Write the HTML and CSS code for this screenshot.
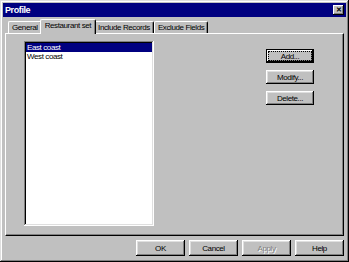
FILE: index.html
```html
<!DOCTYPE html>
<html>

<head>
  <meta charset="UTF-8">
  <title>Profile</title>
  <link rel="stylesheet" href="styles.css">
</head>

<body>
  <div class="window">
    <div class="titlebar">
      <span class="title">Profile</span>
      <span class="close">&#x2715;</span>
    </div>
    <div class="content">
      <div class="tabs">
        <div class="tab">General</div>
        <div class="tab active">Restaurant set</div>
        <div class="tab">Include Records</div>
        <div class="tab">Exclude Fields</div>
      </div>
      <div class="panel">
        <ul class="list">
          <li class="selected">East coast</li>
          <li>West coast</li>
        </ul>
        <div class="side">
          <button class="btn default">Add...</button>
          <button class="btn">Modify...</button>
          <button class="btn">Delete...</button>
        </div>
      </div>
      <div class="footer">
        <button class="btn wide">OK</button>
        <button class="btn wide">Cancel</button>
        <button class="btn wide disabled">Apply</button>
        <button class="btn wide">Help</button>
      </div>
    </div>
  </div>
</body>

</html>
```

FILE: styles.css
```css
* {
  margin: 0;
  padding: 0;
  box-sizing: border-box;
}

body {
  background: #c0c0c0;
  font-family: "Liberation Sans", Arial, sans-serif;
  font-size: 8px;
  letter-spacing: -0.4px;
  color: #000;
}

.window {
  width: 349px;
  height: 262px;
  padding: 3px;
  display: flex;
  flex-direction: column;
  background: #c0c0c0;
  box-shadow: inset -1px -1px #000, inset 1px 1px #dfdfdf,
    inset -2px -2px #808080, inset 2px 2px #fff;
}

.titlebar {
  height: 14px;
  background: #000080;
  display: flex;
  align-items: center;
  justify-content: space-between;
  padding: 0 2px 0 2px;
}

.title {
  color: #fff;
  font-weight: bold;
  font-size: 9px;
  letter-spacing: -0.4px;
}

.close {
  width: 11px;
  height: 10px;
  background: #c0c0c0;
  font-size: 7px;
  font-weight: bold;
  line-height: 10px;
  text-align: center;
  letter-spacing: 0;
  box-shadow: inset -1px -1px #000, inset 1px 1px #fff,
    inset -2px -2px #808080;
}

.content {
  flex: 1;
  display: flex;
  flex-direction: column;
  padding: 2px 2px 3px 2px;
}

.tabs {
  display: flex;
  align-items: flex-end;
  height: 14px;
  padding-left: 3px;
}

.tab {
  height: 12px;
  line-height: 12px;
  padding: 0 3px;
  border-top: 1px solid #fff;
  border-left: 1px solid #fff;
  border-right: 1px solid #000;
  border-radius: 2px 2px 0 0;
  box-shadow: inset -1px 0 #808080;
}

.tab.active {
  position: relative;
  z-index: 1;
  height: 15px;
  margin: 0 -2px -1px -2px;
  padding: 0 4px 2px 4px;
  line-height: 12px;
  background: #c0c0c0;
}

.panel {
  flex: 1;
  display: flex;
  align-items: flex-start;
  padding: 7px 0 0 18px;
  border-top: 1px solid #fff;
  border-left: 1px solid #fff;
  border-right: 1px solid #000;
  border-bottom: 1px solid #000;
  box-shadow: inset -1px -1px #808080;
}

.list {
  list-style: none;
  width: 130px;
  height: 185px;
  padding: 2px;
  background: #fff;
  box-shadow: inset -1px -1px #fff, inset 1px 1px #808080,
    inset -2px -2px #dfdfdf, inset 2px 2px #000;
}

.list li {
  height: 9px;
  line-height: 9px;
  padding-left: 1px;
}

.list li.selected {
  background: #000080;
  color: #fff;
}

.side {
  display: flex;
  flex-direction: column;
  gap: 7px;
  margin: 8px 0 0 112px;
}

.btn {
  width: 48px;
  height: 14px;
  background: #c0c0c0;
  border: none;
  font-family: inherit;
  font-size: 8px;
  letter-spacing: -0.4px;
  color: #000;
  box-shadow: inset -1px -1px #000, inset 1px 1px #fff,
    inset -2px -2px #808080, inset 2px 2px #dfdfdf;
}

.btn.default {
  border: 1px solid #000;
  outline: 1px dotted #000;
  outline-offset: -3px;
  box-shadow: inset -1px -1px #000, inset 1px 1px #fff,
    inset -2px -2px #808080;
}

.footer {
  display: flex;
  justify-content: flex-end;
  gap: 4px;
  margin-top: 4px;
}

.btn.wide {
  width: 49px;
  height: 16px;
}

.btn.disabled {
  color: #808080;
  text-shadow: 1px 1px #fff;
}
```
